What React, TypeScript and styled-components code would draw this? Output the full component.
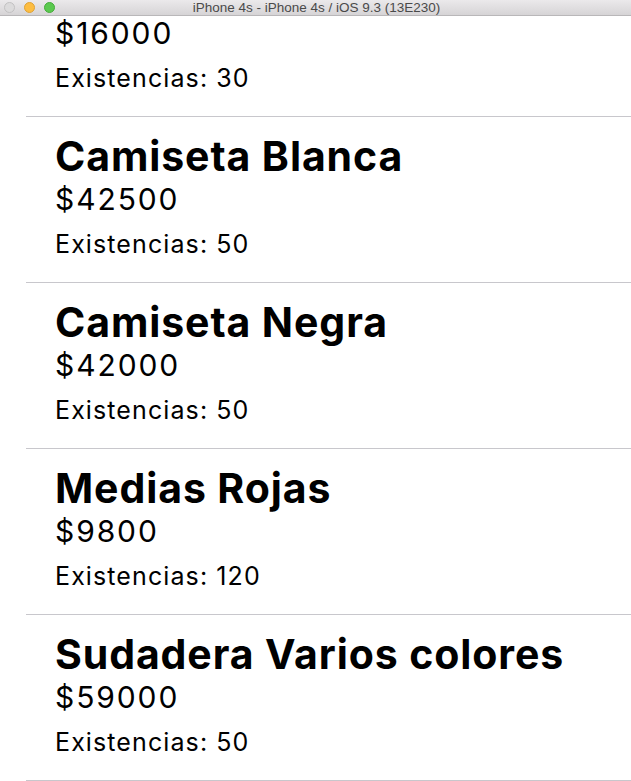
import React from "react";
import styled, { createGlobalStyle } from "styled-components";

const Global = createGlobalStyle`
  html, body { margin: 0; padding: 0; background: #ffffff; }
  body { width: 631px; height: 781px; overflow: hidden; }
`;

const Window = styled.div`
  width: 631px;
  height: 781px;
  display: flex;
  flex-direction: column;
  background: #ffffff;
  overflow: hidden;
`;

const TitleBar = styled.div`
  position: relative;
  flex: 0 0 auto;
  height: 15px;
  border-bottom: 1px solid #b9b7b9;
  background: linear-gradient(#ebe9eb, #d6d4d6);
  display: flex;
  align-items: center;
  justify-content: center;
`;

const Lights = styled.div`
  position: absolute;
  left: 4px;
  top: 2px;
  display: flex;
  gap: 9px;
`;

const Light = styled.span<{ $fill: string; $ring: string }>`
  width: 11px;
  height: 11px;
  border-radius: 50%;
  box-sizing: border-box;
  background: ${(p) => p.$fill};
  border: 0.5px solid ${(p) => p.$ring};
`;

const Title = styled.div`
  font-family: "Liberation Sans", Arial, sans-serif;
  font-size: 13.5px;
  line-height: 15px;
  color: #4a4a4a;
  margin-left: 2px;
`;

const Screen = styled.div`
  flex: 1 1 auto;
  overflow: hidden;
`;

const List = styled.div<{ $offset: number }>`
  margin-top: ${(p) => -p.$offset}px;
  display: flex;
  flex-direction: column;
`;

const Item = styled.div`
  margin-left: 26px;
  height: 165px;
  box-sizing: content-box;
  border-bottom: 1px solid #c8c7cc;
  padding-left: 29px;
  display: flex;
  flex-direction: column;
  font-family: Inter, "Noto Sans", sans-serif;
  color: #000000;
`;

const Name = styled.div`
  margin-top: 15px;
  font-size: 41px;
  font-weight: 700;
  line-height: 48px;
  letter-spacing: 0.9px;
  white-space: nowrap;
`;

const Price = styled.div`
  margin-top: 1px;
  font-size: 30px;
  line-height: 36px;
  font-weight: 400;
  letter-spacing: 1.9px;
`;

const Stock = styled.div`
  margin-top: 12px;
  font-size: 25px;
  line-height: 30px;
  font-weight: 400;
  letter-spacing: 1.1px;
`;

const products = [
  { name: "Gorra", price: 16000, stock: 30 },
  { name: "Camiseta Blanca", price: 42500, stock: 50 },
  { name: "Camiseta Negra", price: 42000, stock: 50 },
  { name: "Medias Rojas", price: 9800, stock: 120 },
  { name: "Sudadera Varios colores", price: 59000, stock: 50 },
];

export default function App() {
  return (
    <Window>
      <Global />
      <TitleBar>
        <Lights>
          <Light $fill="#dcdbdc" $ring="#c2c1c2" />
          <Light $fill="#fdbd41" $ring="#dea236" />
          <Light $fill="#5bc94f" $ring="#45ab3a" />
        </Lights>
        <Title>iPhone 4s - iPhone 4s / iOS 9.3 (13E230)</Title>
      </TitleBar>
      <Screen>
        <List $offset={65}>
          {products.map((p) => (
            <Item key={p.name}>
              <Name>{p.name}</Name>
              <Price>${p.price}</Price>
              <Stock>Existencias: {p.stock}</Stock>
            </Item>
          ))}
        </List>
      </Screen>
    </Window>
  );
}
